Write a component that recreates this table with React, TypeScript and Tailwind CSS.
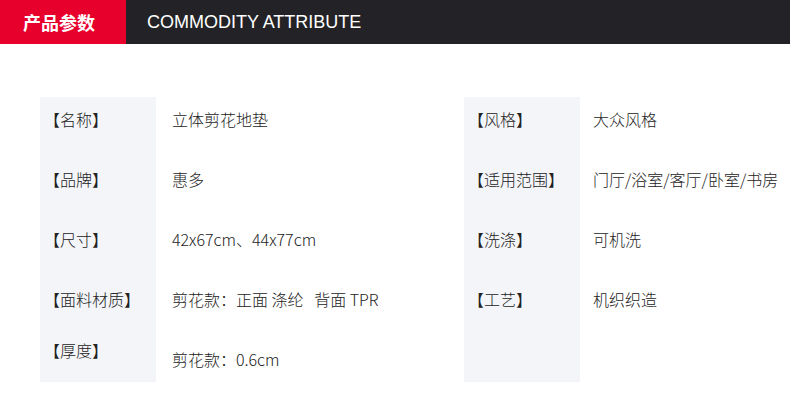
const cjk = { fontFamily: '"Noto Sans CJK SC", "Noto Sans", sans-serif' };

const left: [string, string][] = [
  ["【名称】", "立体剪花地垫"],
  ["【品牌】", "惠多"],
  ["【尺寸】", "42x67cm、44x77cm"],
  ["【面料材质】", "剪花款：正面 涤纶\u00a0\u00a0 背面 TPR"],
];

const right: [string, string][] = [
  ["【风格】", "大众风格"],
  ["【适用范围】", "门厅/浴室/客厅/卧室/书房"],
  ["【洗涤】", "可机洗"],
  ["【工艺】", "机织织造"],
];

function Row({ label, value, gap }: { label: string; value: string; gap: string }) {
  return (
    <div className="flex h-[60px]">
      <div className="w-[116px] pl-[4px] leading-[22px]">{label}</div>
      <div className={`flex-1 ${gap} leading-[22px] whitespace-nowrap`}>{value}</div>
    </div>
  );
}

export default function App() {
  return (
    <div className="h-[411px] w-[790px] overflow-hidden bg-white text-[16px] font-light text-[#222]" style={cjk}>
      {/* header bar */}
      <div className="flex h-[44px] bg-[#232327]">
        <div className="flex w-[126px] items-center bg-[#e8002d] pl-[23px] text-[18px] font-bold text-white">
          产品参数
        </div>
        <div
          className="flex items-center pl-[21px] text-[18px] font-normal text-white"
          style={{ fontFamily: '"Liberation Sans", Arial, sans-serif' }}
        >
          COMMODITY ATTRIBUTE
        </div>
      </div>

      <div className="mt-[53px] flex">
        {/* left table */}
        <div className="relative ml-[40px] w-[424px]">
          <div className="absolute left-0 top-0 h-[285px] w-[116px] bg-[#f4f5f9]" />
          <div className="relative pt-[11px]">
            {left.map(([l, v]) => (
              <Row key={l} label={l} value={v} gap="pl-[16px]" />
            ))}
            <div className="-mt-[9px] flex">
              <div className="w-[116px] pl-[4px] leading-[22px]">【厚度】</div>
              <div className="mt-[9px] flex-1 pl-[16px] leading-[22px]">剪花款：0.6cm</div>
            </div>
          </div>
        </div>

        {/* right table */}
        <div className="relative w-[326px]">
          <div className="absolute left-0 top-0 h-[285px] w-[116px] bg-[#f4f5f9]" />
          <div className="relative pt-[11px]">
            {right.map(([l, v]) => (
              <Row key={l} label={l} value={v} gap="pl-[13px]" />
            ))}
          </div>
        </div>
      </div>
    </div>
  );
}
